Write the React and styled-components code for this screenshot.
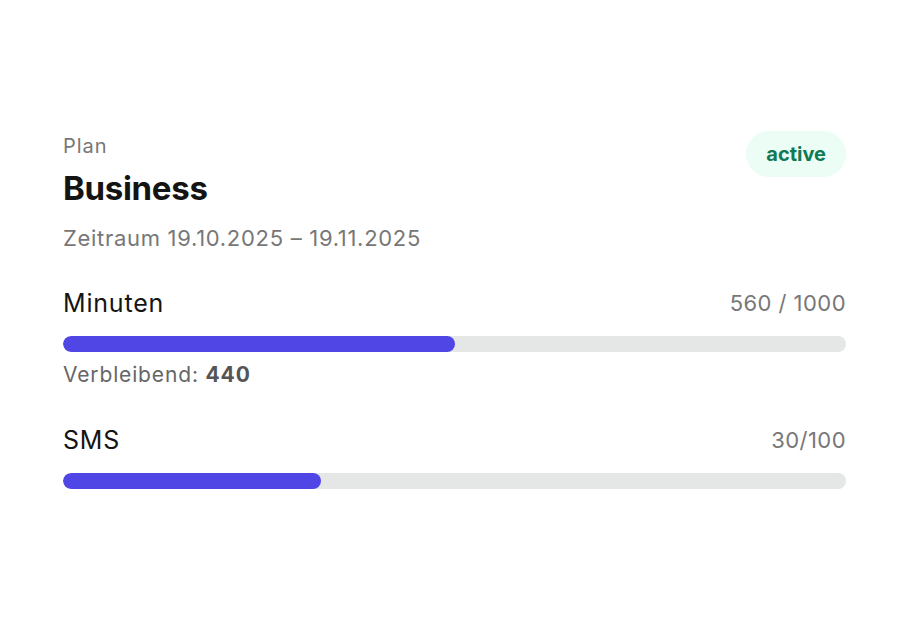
import styled, { createGlobalStyle } from "styled-components";

const GlobalStyle = createGlobalStyle`
  body {
    margin: 0;
    background: #fff;
    font-family: Inter, "Noto Sans", sans-serif;
  }
`;

const usage = [
  { label: "Minuten", value: "560 / 1000", fill: 50, remaining: 440 },
  { label: "SMS", value: "30/100", fill: 33 },
];

export default function App() {
  return (
    <>
      <GlobalStyle />
      <Page>
        <Card>
          <Header>
            <div>
              <Eyebrow>Plan</Eyebrow>
              <Title>Business</Title>
              <Period>Zeitraum 19.10.2025 – 19.11.2025</Period>
            </div>
            <Badge>active</Badge>
          </Header>
          {usage.map((u) => (
            <Usage key={u.label}>
              <UsageRow>
                <UsageLabel>{u.label}</UsageLabel>
                <UsageValue>{u.value}</UsageValue>
              </UsageRow>
              <Track>
                <Fill style={{ width: `${u.fill}%` }} />
              </Track>
              {u.remaining !== undefined && (
                <Remaining>
                  Verbleibend: <b>{u.remaining}</b>
                </Remaining>
              )}
            </Usage>
          ))}
        </Card>
      </Page>
    </>
  );
}

const Page = styled.div`
  width: 900px;
  height: 634px;
  padding-top: 110px;
  padding-left: 39px;
  box-sizing: border-box;
`;

const Card = styled.div`
  width: 846px;
  box-sizing: border-box;
  padding: 21px 39px 24px 24px;
  background: #fff;
`;

const Header = styled.div`
  display: flex;
  justify-content: space-between;
  align-items: flex-start;
`;

const Eyebrow = styled.div`
  font-size: 20px;
  line-height: 30px;
  color: #777;
  letter-spacing: 1px;
`;

const Title = styled.div`
  margin-top: 5px;
  font-size: 33px;
  line-height: 44px;
  font-weight: 700;
  color: #141414;
  letter-spacing: -0.3px;
`;

const Period = styled.div`
  margin-top: 13px;
  font-size: 22px;
  line-height: 30px;
  color: #777;
  letter-spacing: 0.7px;
`;

const Badge = styled.div`
  height: 46px;
  padding: 0 20px;
  display: flex;
  align-items: center;
  border-radius: 23px;
  background: #ecfdf5;
  color: #0f7a55;
  font-size: 20px;
  font-weight: 700;
`;

const Usage = styled.div`
  margin-top: 33px;
`;

const UsageRow = styled.div`
  display: flex;
  justify-content: space-between;
  align-items: center;
  height: 34px;
`;

const UsageLabel = styled.div`
  font-size: 25px;
  color: #141414;
  letter-spacing: 0.8px;
`;

const UsageValue = styled.div`
  font-size: 22px;
  color: #777;
  letter-spacing: 0.45px;
`;

const Track = styled.div`
  margin-top: 16px;
  height: 16px;
  border-radius: 8px;
  background: #e5e6e6;
  overflow: hidden;
`;

const Fill = styled.div`
  height: 100%;
  border-radius: 8px;
  background: #4f46e5;
`;

const Remaining = styled.div`
  margin-top: 8px;
  font-size: 21px;
  line-height: 30px;
  color: #666;
  letter-spacing: 0.85px;

  b {
    color: #555;
    font-weight: 700;
  }
`;
